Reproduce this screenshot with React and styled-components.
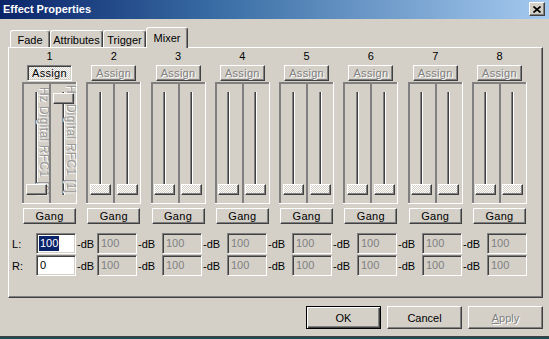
import styled, { createGlobalStyle } from "styled-components";

const FACE = "#D4D0C8";

const GlobalStyle = createGlobalStyle`
  html, body {
    margin: 0;
    padding: 0;
    background: #1e4a52;
  }
  body {
    font-family: "Liberation Sans", Arial, sans-serif;
    font-size: 11px;
    color: #000;
  }
  * { box-sizing: border-box; }
`;

const raised = `
  border: 1px solid;
  border-color: #fff #404040 #404040 #fff;
  box-shadow: inset -1px -1px 0 #808080;
`;

const sunken = `
  border: 1px solid;
  border-color: #808080 #fff #fff #808080;
  box-shadow: inset 1px 1px 0 #404040, inset -1px -1px 0 ${FACE};
`;

const dither = `
  background: repeating-conic-gradient(#fff 0 25%, ${FACE} 0 50%) 0 0 / 2px 2px;
`;

const disabledText = `
  color: #808080;
  text-shadow: 1px 1px 0 #fff;
`;

const Window = styled.div`
  width: 549px;
  height: 337px;
  background: ${FACE};
  border-bottom: 1px solid #404040;
  display: flex;
  flex-direction: column;
`;

const TitleBar = styled.div`
  height: 19px;
  padding: 0 4px 1px 3px;
  display: flex;
  align-items: center;
  justify-content: space-between;
  background: linear-gradient(to right, #0a246a, #3a6ea5 40%, #a6caf0);
  color: #fff;
  font-weight: bold;
  font-size: 11px;
`;

const CloseBtn = styled.div`
  width: 16px;
  height: 14px;
  background: ${FACE};
  ${raised}
  display: flex;
  align-items: center;
  justify-content: center;
`;

const Body = styled.div`
  flex: 1;
  padding: 7px 6px 0 8px;
  display: flex;
  flex-direction: column;
`;

const TabStrip = styled.div`
  height: 21px;
  display: flex;
  align-items: flex-end;
  padding-left: 2px;
  position: relative;
  z-index: 1;
`;

const Tab = styled.div`
  width: ${(p) => p.$w}px;
  height: ${(p) => (p.$active ? 21 : 17)}px;
  margin-bottom: ${(p) => (p.$active ? -1 : 0)}px;
  padding-top: ${(p) => (p.$active ? 0 : 1)}px;
  background: ${FACE};
  border-top: 1px solid #fff;
  border-left: 1px solid #fff;
  border-right: 1px solid #404040;
  box-shadow: inset -1px 0 0 #808080;
  border-radius: 3px 3px 0 0;
  display: flex;
  align-items: center;
  justify-content: center;
  font-size: 11px;
`;

const Panel = styled.div`
  width: 535px;
  height: 251px;
  border: 1px solid;
  border-color: #fff #404040 #404040 #fff;
  box-shadow: inset -1px -1px 0 #808080;
  display: flex;
  flex-direction: column;
`;

const Channels = styled.div`
  width: 518px;
  padding: 1px 0 0 13px;
  display: flex;
  justify-content: space-between;
`;

const Channel = styled.div`
  width: 55px;
  display: flex;
  flex-direction: column;
  align-items: center;
`;

const ChannelNo = styled.div`
  height: 15px;
  line-height: 15px;
  font-size: 11px;
`;

const SmallButton = styled.div`
  width: ${(p) => p.$w}px;
  height: 16px;
  margin-top: ${(p) => p.$mt}px;
  background: ${FACE};
  ${raised}
  display: flex;
  align-items: center;
  justify-content: center;
  font-size: 11px;
  letter-spacing: 0.3px;
  ${(p) => p.$disabled && disabledText}
  ${(p) =>
    p.$pressed &&
    `
    ${sunken}
    ${dither}
  `}
`;

const FaderBox = styled.div`
  width: 55px;
  height: 122px;
  margin-top: 1px;
  display: flex;
  border-right: 1px solid #fff;
  border-bottom: 1px solid #fff;
`;

const FaderHalf = styled.div`
  position: relative;
  flex: 1;
  border-left: 2px solid #808080;
  border-top: 2px solid #808080;
`;

const Track = styled.div`
  position: absolute;
  left: 50%;
  top: 8px;
  bottom: 8px;
  width: 3px;
  margin-left: -2px;
  background: #404040;
  border-left: 1px solid #808080;
  border-right: 1px solid #fff;
`;

const Thumb = styled.div`
  position: absolute;
  left: 50%;
  top: ${(p) => p.$top}px;
  width: 21px;
  height: 11px;
  margin-left: -11px;
  background: ${FACE};
  ${raised}
  ${(p) => p.$disabled && dither}
`;

const VerticalLabel = styled.div`
  position: absolute;
  left: calc(50% + 2px);
  top: ${(p) => p.$top}px;
  writing-mode: vertical-rl;
  white-space: nowrap;
  font-size: 12px;
  letter-spacing: 0.3px;
  line-height: 10px;
  color: #999;
  text-shadow: 1px 1px 0 #fff;
`;

const Levels = styled.div`
  margin-top: 9px;
  padding-left: 3px;
  display: flex;
  flex-direction: column;
  gap: 1px;
`;

const LevelRow = styled.div`
  display: flex;
  align-items: center;
  height: 21px;
`;

const SideLabel = styled.div`
  flex: none;
  width: 24px;
  font-size: 11px;
`;

const LevelBox = styled.div`
  flex: none;
  width: 40px;
  height: 21px;
  padding: 2px 0 0 3px;
  background: ${(p) => (p.$enabled ? "#fff" : FACE)};
  color: ${(p) => (p.$enabled ? "#000" : "#808080")};
  ${sunken}
  font-size: 11px;
  line-height: 14px;
`;

const Selection = styled.span`
  display: inline-block;
  background: #0a246a;
  color: #fff;
  line-height: 15px;
  margin-left: -1px;
  padding: 0 1px;
`;

const Unit = styled.div`
  flex: none;
  width: ${(p) => (p.$first ? 21 : 25)}px;
  padding-left: 1px;
  font-size: 11px;
`;

const Footer = styled.div`
  margin-top: 8px;
  display: flex;
  justify-content: flex-end;
  gap: 6px;
`;

const DialogButton = styled.div`
  width: 75px;
  height: 23px;
  background: ${FACE};
  display: flex;
  align-items: center;
  justify-content: center;
  font-size: 11px;
  ${(p) =>
    p.$default
      ? `
    border: 1px solid #000;
    box-shadow: inset 1px 1px 0 #fff, inset -1px -1px 0 #404040, inset -2px -2px 0 #808080;
  `
      : raised}
  ${(p) => p.$disabled && disabledText}
`;

const CloseIcon = () => (
  <svg width="8" height="7" viewBox="0 0 8 7">
    <path d="M0.5 0.5 L7.5 6.5 M7.5 0.5 L0.5 6.5" stroke="#000" strokeWidth="1.7" fill="none" />
  </svg>
);

const tabs = [
  { name: "Fade", w: 40 },
  { name: "Attributes", w: 53 },
  { name: "Trigger", w: 43 },
  { name: "Mixer", w: 42, active: true },
];

const channels = [1, 2, 3, 4, 5, 6, 7, 8];

function LevelCell({ n, side }) {
  const live = n === 1;
  const value = live && side === "R" ? "0" : "100";
  return (
    <>
      <LevelBox $enabled={live}>
        {live && side === "L" ? <Selection>100</Selection> : value}
      </LevelBox>
      {n < 8 && <Unit $first={n === 1}>-dB</Unit>}
    </>
  );
}

export default function App() {
  return (
    <>
      <GlobalStyle />
      <Window>
        <TitleBar>
          <span>Effect Properties</span>
          <CloseBtn>
            <CloseIcon />
          </CloseBtn>
        </TitleBar>
        <Body>
          <TabStrip>
            {tabs.map((t) => (
              <Tab key={t.name} $w={t.w} $active={t.active}>
                {t.name}
              </Tab>
            ))}
          </TabStrip>
          <Panel>
            <Channels>
              {channels.map((n) => {
                const live = n === 1;
                return (
                  <Channel key={n}>
                    <ChannelNo>{n}</ChannelNo>
                    <SmallButton $w={45} $mt={1} $disabled={!live} $pressed={live}>
                      Assign
                    </SmallButton>
                    <FaderBox>
                      <FaderHalf>
                        <Track />
                        {live && <VerticalLabel $top={3}>Hz Digital RFC1 [0]</VerticalLabel>}
                        <Thumb $top={100} $disabled={!live} />
                      </FaderHalf>
                      <FaderHalf>
                        <Track />
                        {live && <VerticalLabel $top={1}>Hz Digital RFC1 [1]</VerticalLabel>}
                        <Thumb $top={live ? 9 : 100} $disabled={!live} />
                      </FaderHalf>
                    </FaderBox>
                    <SmallButton $w={53} $mt={4}>
                      Gang
                    </SmallButton>
                  </Channel>
                );
              })}
            </Channels>
            <Levels>
              {["L", "R"].map((side) => (
                <LevelRow key={side}>
                  <SideLabel>{side}:</SideLabel>
                  {channels.map((n) => (
                    <LevelCell key={n} n={n} side={side} />
                  ))}
                </LevelRow>
              ))}
            </Levels>
          </Panel>
          <Footer>
            <DialogButton $default>OK</DialogButton>
            <DialogButton>Cancel</DialogButton>
            <DialogButton $disabled>
              <span>
                <u>A</u>pply
              </span>
            </DialogButton>
          </Footer>
        </Body>
      </Window>
    </>
  );
}
